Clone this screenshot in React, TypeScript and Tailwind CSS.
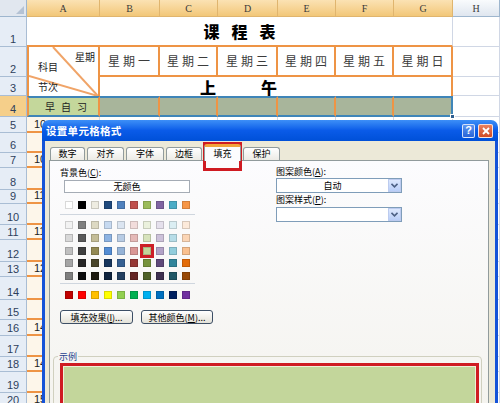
import React from "react";

const base = ["bg-[#FFFFFF]","bg-[#000000]","bg-[#EEECE1]","bg-[#1F497D]","bg-[#4F81BD]","bg-[#C0504D]","bg-[#9BBB59]","bg-[#8064A2]","bg-[#4BACC6]","bg-[#F79646]"];
const tints = [
  ["bg-[#F2F2F2]","bg-[#7F7F7F]","bg-[#DDD9C3]","bg-[#C6D9F0]","bg-[#DBE5F1]","bg-[#F2DCDB]","bg-[#EBF1DD]","bg-[#E5E0EC]","bg-[#DBEEF3]","bg-[#FDEADA]"],
  ["bg-[#D8D8D8]","bg-[#595959]","bg-[#C4BD97]","bg-[#8DB3E2]","bg-[#B8CCE4]","bg-[#E5B9B7]","bg-[#D7E3BC]","bg-[#CCC1D9]","bg-[#B7DDE8]","bg-[#FBD5B5]"],
  ["bg-[#BFBFBF]","bg-[#3F3F3F]","bg-[#938953]","bg-[#548DD4]","bg-[#95B3D7]","bg-[#D99694]","bg-[#C3D69B]","bg-[#B2A2C7]","bg-[#92CDDC]","bg-[#FAC08F]"],
  ["bg-[#A5A5A5]","bg-[#262626]","bg-[#494429]","bg-[#17365D]","bg-[#366092]","bg-[#953734]","bg-[#76923C]","bg-[#5F497A]","bg-[#31859B]","bg-[#E36C09]"],
  ["bg-[#7F7F7F]","bg-[#0C0C0C]","bg-[#1D1B10]","bg-[#0F243E]","bg-[#244061]","bg-[#632423]","bg-[#4F6128]","bg-[#3F3151]","bg-[#205867]","bg-[#974806]"],
];
const std = ["bg-[#C00000]","bg-[#FF0000]","bg-[#FFC000]","bg-[#FFFF00]","bg-[#92D050]","bg-[#00B050]","bg-[#00B0F0]","bg-[#0070C0]","bg-[#002060]","bg-[#7030A0]"];

const weekdays = ["星期一", "星期二", "星期三", "星期四", "星期五", "星期日"];
const lowerRows: { n: number; t: string }[] = [
  { n: 5, t: "10" }, { n: 6, t: "" }, { n: 7, t: "10" }, { n: 8, t: "" },
  { n: 9, t: "11" }, { n: 10, t: "" }, { n: 11, t: "11" }, { n: 12, t: "" },
  { n: 13, t: "12" }, { n: 14, t: "" }, { n: 15, t: "" }, { n: 16, t: "14" },
  { n: 17, t: "" }, { n: 18, t: "14" }, { n: 19, t: "" }, { n: 20, t: "15" },
];

function RowNum({ n, sel }: { n: number; sel?: boolean }) {
  return (
    <div
      className={
        "flex items-end justify-center pb-[1px] text-[11px] leading-none border-r border-b border-[#a9bdd4] text-[#2e3f5c] font-['Liberation_Sans',sans-serif] " +
        (sel ? "bg-[#f5cf8a]" : "bg-[#e6edf6]")
      }
    >
      {n}
    </div>
  );
}

function Plain() {
  return <div className="border-r border-b border-[#d0d7e5] bg-white" />;
}

function Sheet() {
  return (
    <div className="grid grid-cols-[27px_73px_60px_58px_60px_58px_58px_59px_47px] grid-rows-[17px_30px_30px_19px_21px_16px_20px_15px_22px_14px_21px_15px_22px_15px_23px_20px_16px_21px_15px_21px_15px] font-['Noto_Sans_CJK_SC',sans-serif]">
      {/* header row */}
      <div className="relative bg-[#e1e7ef] border-r border-b border-[#9eb6ce]">
        <svg className="absolute right-[2px] bottom-[2px]" width="8" height="8" viewBox="0 0 8 8">
          <polygon points="8,0 8,8 0,8" fill="#b4c2d4" />
        </svg>
      </div>
      {["A", "B", "C", "D", "E", "F", "G"].map((c) => (
        <div
          key={c}
          className="flex items-center justify-center bg-linear-to-b from-[#fbe2b3] to-[#f2c778] border-r border-b border-[#e0b56e] text-[10px] text-[#3a3a3a] font-['Liberation_Serif',serif]"
        >
          {c}
        </div>
      ))}
      <div className="flex items-center justify-center bg-linear-to-b from-[#f9fbfd] to-[#dfe6ef] border-r border-b border-[#9eb6ce] text-[10px] text-[#3a3a3a] font-['Liberation_Serif',serif]">
        H
      </div>

      {/* row 1 */}
      <RowNum n={1} />
      <div className="col-span-7 flex items-center justify-center pl-[12px] bg-white border-b-2 border-b-[#ee9445] border-r border-r-[#d0d7e5] text-[16px] font-black tracking-[12px] text-black">
        课程表
      </div>
      <Plain />

      {/* row 2 */}
      <RowNum n={2} />
      <div className="row-span-2 relative flex flex-col pt-[4px] pl-[9px] pr-[3px] bg-white border-l-2 border-r-2 border-[#ee9445] text-[10px] leading-[12px] text-[#222]">
        <svg className="absolute inset-0 w-full h-full" viewBox="0 0 69 49" preserveAspectRatio="none">
          <line x1="24" y1="0" x2="69" y2="49" stroke="#f0a468" strokeWidth="2" />
          <line x1="0" y1="29" x2="69" y2="49" stroke="#f0a468" strokeWidth="2" />
        </svg>
        <span className="self-end relative">星期</span>
        <span className="self-start relative -mt-[2px]">科目</span>
        <span className="self-start relative mt-[8px]">节次</span>
      </div>
      {weekdays.map((w) => (
        <div
          key={w}
          className="flex items-center justify-center pl-[3px] bg-white border-r-2 border-b-2 border-[#ee9445] text-[12px] tracking-[3px] text-[#3c3c3c]"
        >
          {w}
        </div>
      ))}
      <Plain />

      {/* row 3 */}
      <RowNum n={3} />
      <div className="col-start-3 col-span-6 flex items-end gap-[45px] pl-[100px] bg-white border-r-2 border-[#ee9445] text-[16px] leading-[18px] font-black text-black">
        <span>上</span>
        <span>午</span>
      </div>
      <Plain />

      {/* row 4 */}
      <RowNum n={4} sel />
      <div className="flex items-center pl-[16px] whitespace-nowrap overflow-hidden bg-[#c4d79b] border-t-2 border-b-2 border-t-[#3f85b8] border-b-[#3f85b8] border-l-2 border-r-2 border-l-[#ee9445] border-r-[#ee9445] text-[10px] leading-none tracking-[6px] text-[#222]">
        早自习
      </div>
      {[0, 1, 2, 3, 4].map((i) => (
        <div
          key={i}
          className="bg-[#a8b59b] border-t-2 border-b-2 border-t-[#3f85b8] border-b-[#3f85b8] border-r-2 border-r-[#ee9445]"
        />
      ))}
      <div className="relative bg-[#a8b59b] border-2 border-l-0 border-[#3f85b8]">
        <div className="absolute -right-[4px] -bottom-[4px] w-[5px] h-[5px] bg-[#2f5f8f] border border-white" />
      </div>
      <Plain />

      {/* rows 5-20 */}
      {lowerRows.map((r) => (
        <React.Fragment key={r.n}>
          <RowNum n={r.n} />
          <div className="flex items-end pl-[7px] whitespace-nowrap overflow-hidden bg-[#fdf6ea] border-r border-r-[#d0d7e5] border-b-2 border-b-[#ee9445] text-[11px] leading-[13px] text-[#222] font-['Liberation_Sans',sans-serif]">
            {r.t}
          </div>
          <Plain />
          <Plain />
          <Plain />
          <Plain />
          <Plain />
          <Plain />
          <Plain />
        </React.Fragment>
      ))}
    </div>
  );
}

function Swatch({ c, sel }: { c: string; sel?: boolean }) {
  return (
    <div className={"relative w-[8px] h-[8px] border border-black/15 " + c}>
      {sel && <div className="absolute -inset-[4px] border-[3px] border-[#cc1f27]" />}
    </div>
  );
}

function Combo({ text }: { text?: string }) {
  return (
    <div className="w-[126px] h-[15px] border border-[#7f9db9] bg-white flex">
      <div className="flex-1 flex items-center justify-center text-[9px] leading-none text-black">{text}</div>
      <div className="w-[13px] h-full bg-linear-to-b from-[#dde8fd] to-[#b9cef8] border border-[#bccbef] flex items-center justify-center">
        <svg width="7" height="5" viewBox="0 0 7 5">
          <polyline points="0.5,0.8 3.5,3.8 6.5,0.8" fill="none" stroke="#4d6185" strokeWidth="1.6" />
        </svg>
      </div>
    </div>
  );
}

function Tab({ label, w, sel }: { label: string; w: string; sel?: boolean }) {
  if (sel) {
    return (
      <div
        className={
          "relative z-10 -mb-[1px] h-[17px] flex items-center justify-center pb-[1px] rounded-t-[3px] border-x border-[#919b9c] border-t-[3px] border-t-[#f2a43a] bg-[#fcfcfe] text-[9px] text-black " +
          w
        }
      >
        {label}
      </div>
    );
  }
  return (
    <div
      className={
        "h-[13px] flex items-center justify-center rounded-t-[3px] border border-b-0 border-[#919b9c] bg-linear-to-b from-white to-[#ecebe5] text-[9px] text-black " +
        w
      }
    >
      {label}
    </div>
  );
}

function Dialog() {
  return (
    <div className="absolute left-[42px] top-[120px] w-[456px] h-[300px] flex flex-col font-['Noto_Sans_CJK_SC',sans-serif]">
      {/* title bar */}
      <div className="h-[21px] shrink-0 rounded-t-[7px] bg-linear-to-b from-[#3d8ff7] via-[#0a5be8] to-[#0050d8] flex items-center justify-between pl-[4px] pr-[5px]">
        <span className="text-white text-[10.5px] font-bold tracking-[0.3px]">设置单元格格式</span>
        <div className="flex gap-[3px]">
          <div className="w-[13px] h-[14px] rounded-[2px] border border-white/80 bg-linear-to-b from-[#5d95f0] to-[#2a64d8] flex items-center justify-center text-white text-[11px] font-bold leading-none font-['Liberation_Sans',sans-serif]">
            ?
          </div>
          <div className="w-[15px] h-[14px] rounded-[2px] border border-white/80 bg-linear-to-b from-[#e8805e] to-[#d04a24] flex items-center justify-center">
            <svg width="8" height="8" viewBox="0 0 8 8">
              <line x1="1" y1="1" x2="7" y2="7" stroke="white" strokeWidth="1.8" />
              <line x1="7" y1="1" x2="1" y2="7" stroke="white" strokeWidth="1.8" />
            </svg>
          </div>
        </div>
      </div>

      {/* body */}
      <div className="flex-1 bg-[#ece9d8] border-x-[3px] border-[#1553d8] pl-[4px] pr-[6px] pt-[3px] flex flex-col">
        <div className="h-[16px] flex items-end gap-[2px] pl-[1px]">
          <Tab label="数字" w="w-[35px]" />
          <Tab label="对齐" w="w-[37px]" />
          <Tab label="字体" w="w-[38px]" />
          <Tab label="边框" w="w-[36px]" />
          <Tab label="填充" w="w-[37px]" sel />
          <Tab label="保护" w="w-[37px]" />
        </div>

        <div className="h-[260px] border border-[#919b9c] bg-linear-to-b from-[#fcfcfe] to-[#f4f3ee] pt-[5px] pl-[10px] text-black">
          <div className="flex">
            {/* left column */}
            <div className="w-[216px] flex flex-col">
              <div className="h-[13px] text-[9px] leading-[13px]">
                背景色(<u>C</u>):
              </div>
              <div className="mt-[1px] ml-[4px] w-[126px] h-[13px] border border-[#a5acb5] bg-white flex items-center justify-center text-[9px] leading-none">
                无颜色
              </div>
              <div className="mt-[8px] ml-[5px] grid grid-cols-[repeat(10,8px)] gap-x-[5px]">
                {base.map((c, i) => (
                  <Swatch key={i} c={c} />
                ))}
              </div>
              <div className="mt-[5px] w-[135px] h-[1px] bg-[#cfd6de]" />
              <div className="mt-[6px] ml-[5px] grid grid-cols-[repeat(10,8px)] gap-x-[5px] gap-y-[4.75px]">
                {tints.map((row, ri) =>
                  row.map((c, ci) => <Swatch key={ri + "-" + ci} c={c} sel={ri === 2 && ci === 6} />)
                )}
              </div>
              <div className="mt-[3px] w-[135px] h-[1px] bg-[#cfd6de]" />
              <div className="mt-[7px] ml-[5px] grid grid-cols-[repeat(10,8px)] gap-x-[5px]">
                {std.map((c, i) => (
                  <Swatch key={i} c={c} />
                ))}
              </div>
              <div className="mt-[11px] flex gap-[8px]">
                <div className="w-[73px] h-[14px] rounded-[3px] border border-[#3d4f66] bg-linear-to-b from-white to-[#e4e2d8] flex items-center justify-center text-[9px] leading-none">
                  填充效果(<u>I</u>)...
                </div>
                <div className="w-[72px] h-[14px] rounded-[3px] border border-[#3d4f66] bg-linear-to-b from-white to-[#e4e2d8] flex items-center justify-center text-[9px] leading-none">
                  其他颜色(<u>M</u>)...
                </div>
              </div>
            </div>

            {/* right column */}
            <div className="flex flex-col">
              <div className="h-[12px] text-[9px] leading-[12px]">
                图案颜色(<u>A</u>):
              </div>
              <Combo text="自动" />
              <div className="mt-[1px] h-[12px] text-[9px] leading-[12px]">
                图案样式(<u>P</u>):
              </div>
              <div className="mt-[1px]">
                <Combo />
              </div>
            </div>
          </div>

          {/* sample */}
          <fieldset className="-ml-[7px] mt-[26px] w-[429px] border border-[#d0d0bf] rounded-[4px] pl-[6px] pr-[2px] pb-[4px]">
            <legend className="-ml-[2px] px-[1px] text-[9px] leading-[13px] text-[#1f3f8f]">示例</legend>
            <div className="h-[50px] border-[3px] border-[#cf1b22]">
              <div className="h-full border border-[#eef0d8] bg-[#c3d69b]" />
            </div>
          </fieldset>
        </div>
      </div>

      {/* red annotation around 填充 tab */}
      <div className="absolute left-[161px] top-[22px] w-[39px] h-[29px] border-[3px] border-[#cf1b22]" />
    </div>
  );
}

export default function App() {
  return (
    <div className="relative w-[500px] h-[403px] overflow-hidden bg-white">
      <Sheet />
      <Dialog />
    </div>
  );
}
